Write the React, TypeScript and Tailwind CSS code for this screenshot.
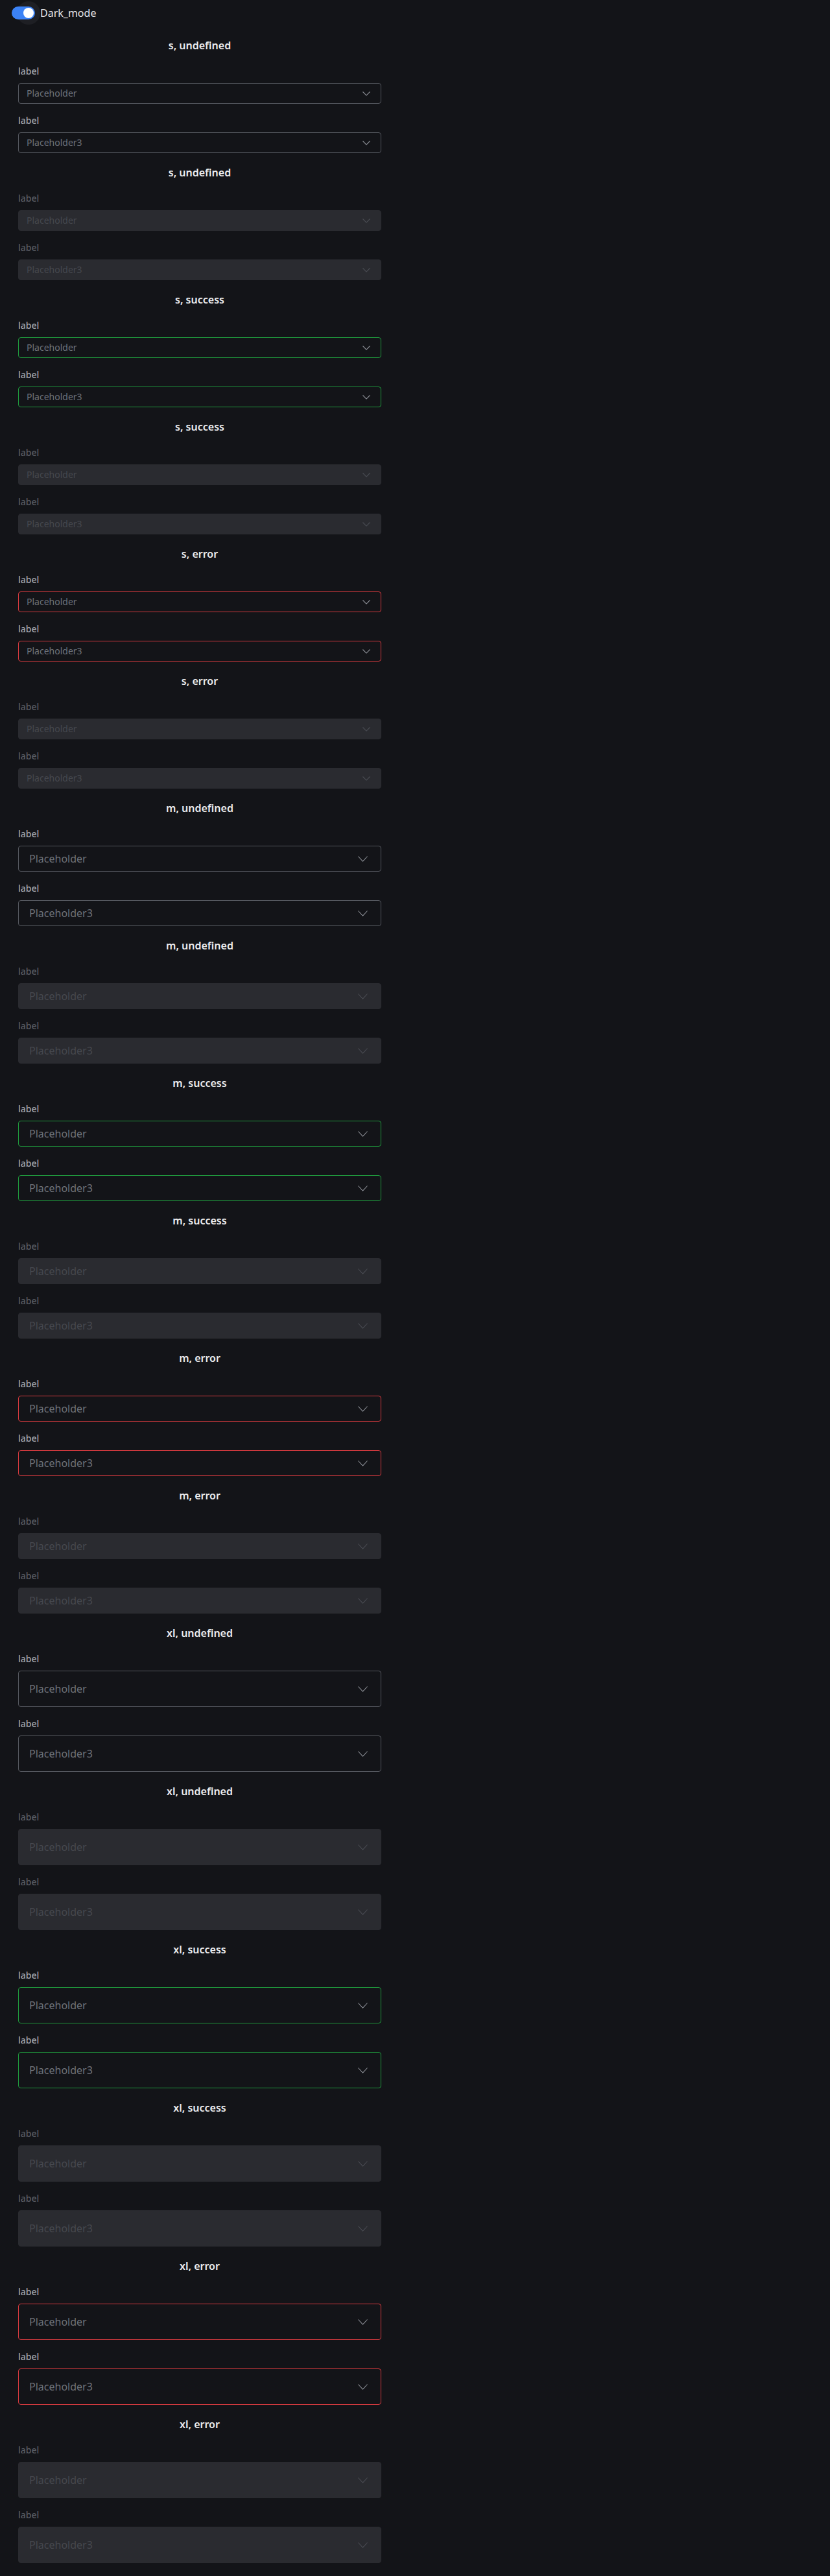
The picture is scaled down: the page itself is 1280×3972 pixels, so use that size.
import React from 'react';

type Size = 's' | 'm' | 'xl';
type Status = 'undefined' | 'success' | 'error';

const sizeStyles: Record<Size, { box: string; text: string; icon: [number, number] }> = {
    s: { box: 'h-8 pl-3 pr-4', text: 'text-sm', icon: [12, 7] },
    m: { box: 'h-10 pl-4 pr-5', text: 'text-base', icon: [15, 9] },
    xl: { box: 'h-14 pl-4 pr-5', text: 'text-base', icon: [15, 9] },
};

const borderByStatus: Record<Status, string> = {
    undefined: 'border-[#55585f]',
    success: 'border-[#1f9b3d]',
    error: 'border-[#d83a3f]',
};

function Chevron({ w, h, color }: { w: number; h: number; color: string }) {
    return (
        <svg width={w} height={h} viewBox={`0 0 ${w} ${h}`} fill="none" className="shrink-0">
            <polyline points={`0.5,0.5 ${w / 2},${h - 0.8} ${w - 0.5},0.5`} stroke={color} strokeWidth="1.1" strokeLinejoin="round" />
        </svg>
    );
}

function SelectField({
    size,
    status,
    disabled,
    placeholder,
}: {
    size: Size;
    status: Status;
    disabled: boolean;
    placeholder: string;
}) {
    const s = sizeStyles[size];
    return (
        <div className="flex flex-col gap-2">
            <span className={`text-sm font-medium leading-5 ${disabled ? 'text-[#595c63]' : 'text-[#a2a5ac]'}`}>label</span>
            <div
                className={`flex w-full items-center justify-between rounded border ${s.box} ${
                    disabled ? 'border-[#2a2b30] bg-[#2a2b30]' : `bg-[#131418] ${borderByStatus[status]}`
                }`}
            >
                <span className={`${s.text} ${disabled ? 'text-[#46484e]' : 'text-[#6f7279]'}`}>{placeholder}</span>
                <Chevron w={s.icon[0]} h={s.icon[1]} color={disabled ? '#4a4c53' : '#8c8f96'} />
            </div>
        </div>
    );
}

function Section({ size, status, disabled }: { size: Size; status: Status; disabled: boolean }) {
    return (
        <section className="flex flex-col gap-5">
            <h2 className="text-center text-base font-semibold leading-5 text-[#ececee]">
                {size}, {status}
            </h2>
            <div className="flex flex-col gap-4">
                <SelectField size={size} status={status} disabled={disabled} placeholder="Placeholder" />
                <SelectField size={size} status={status} disabled={disabled} placeholder="Placeholder3" />
            </div>
        </section>
    );
}

const sizes: Size[] = ['s', 'm', 'xl'];
const statuses: Status[] = ['undefined', 'success', 'error'];

export default function App() {
    return (
        <div className="min-h-screen bg-[#131418] pb-5" style={{ fontFamily: '"Noto Sans", "Noto Sans CJK KR", sans-serif' }}>
            <div className="flex h-10 items-center pl-[18px]">
                <div className="relative h-5 w-9">
                    {/* hover halo behind the switch thumb */}
                    <div className="absolute left-[8px] top-[-8px] h-9 w-9 rounded-full bg-[#1e1f24]" />
                    <div className="absolute inset-0 rounded-full bg-[#3b82f6]" />
                    <div className="absolute right-0.5 top-0.5 h-4 w-4 rounded-full bg-white" />
                </div>
                <span className="relative ml-2 text-base leading-6 text-[#e6e6e8]">Dark_mode</span>
            </div>
            <div className="ml-7 mt-5 flex w-[560px] flex-col gap-5">
                {sizes.map((size) =>
                    statuses.map((status) =>
                        [false, true].map((disabled) => (
                            <Section key={`${size}-${status}-${disabled}`} size={size} status={status} disabled={disabled} />
                        ))
                    )
                )}
            </div>
        </div>
    );
}
